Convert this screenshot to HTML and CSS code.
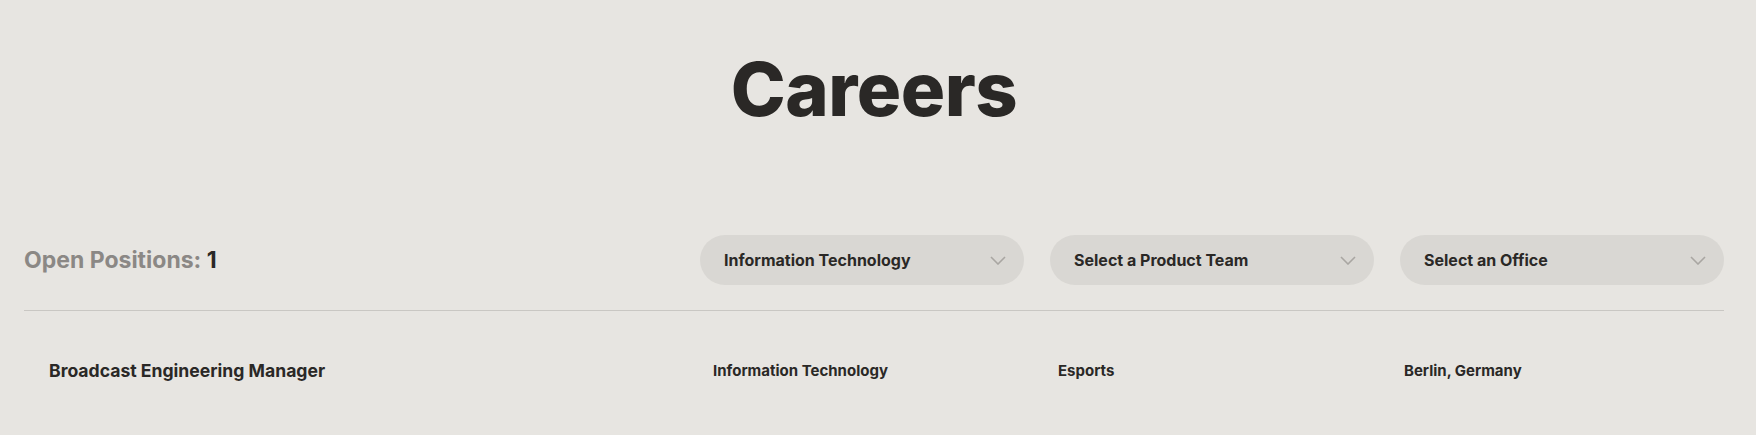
FILE: index.html
```html
<!DOCTYPE html>
<html lang="en">
<head>
<meta charset="utf-8">
<title>Careers</title>
<link rel="stylesheet" href="styles.css">
</head>
<body>
<main class="page">
  <h1 class="title">Careers</h1>
  <div class="filters">
    <div class="count"><span class="count-label">Open Positions:</span> <span class="count-num">1</span></div>
    <div class="selects">
      <div class="select"><span>Information Technology</span><svg class="chev" viewBox="0 0 16 9" width="16" height="9"><path d="M1 1l7 7 7-7" fill="none" stroke="#a9a6a2" stroke-width="1.6"/></svg></div>
      <div class="select"><span>Select a Product Team</span><svg class="chev" viewBox="0 0 16 9" width="16" height="9"><path d="M1 1l7 7 7-7" fill="none" stroke="#a9a6a2" stroke-width="1.6"/></svg></div>
      <div class="select"><span>Select an Office</span><svg class="chev" viewBox="0 0 16 9" width="16" height="9"><path d="M1 1l7 7 7-7" fill="none" stroke="#a9a6a2" stroke-width="1.6"/></svg></div>
    </div>
  </div>
  <div class="job">
    <div class="job-title">Broadcast Engineering Manager</div>
    <div class="job-cell">Information Technology</div>
    <div class="job-cell">Esports</div>
    <div class="job-cell">Berlin, Germany</div>
  </div>
</main>
</body>
</html>
```
FILE: styles.css
```css
html, body {
  margin: 0;
  padding: 0;
  background: #e7e5e1;
}
body {
  font-family: "Inter", "Liberation Sans", sans-serif;
  color: #2a2826;
}
.page {
  width: 1700px;
  padding: 0 0 0 24px;
}
.title {
  margin: 0;
  padding-top: 52px;
  font-size: 74px;
  line-height: 1;
  font-weight: 800;
  text-align: center;
  letter-spacing: -0.5px;
}
.filters {
  margin-top: 109px;
  display: flex;
  align-items: center;
  justify-content: space-between;
  padding-bottom: 25px;
  border-bottom: 1px solid #c9c7c3;
}
.count {
  font-size: 23px;
  font-weight: 700;
}
.count-label { color: #8b8885; }
.count-num { color: #2a2826; }
.selects {
  display: flex;
  gap: 26px;
}
.select {
  width: 324px;
  height: 50px;
  box-sizing: border-box;
  border-radius: 25px;
  background: #d9d7d3;
  padding: 0 18px 0 24px;
  display: flex;
  align-items: center;
  justify-content: space-between;
  font-size: 16px;
  font-weight: 700;
}
.chev { display: block; }
.job {
  display: grid;
  grid-template-columns: 689px 345px 346px 1fr;
  align-items: center;
  padding: 49px 0 25px;
}
.job-title {
  padding-left: 25px;
  font-size: 17.6px;
  font-weight: 700;
}
.job-cell {
  font-size: 15px;
  font-weight: 700;
}
```
